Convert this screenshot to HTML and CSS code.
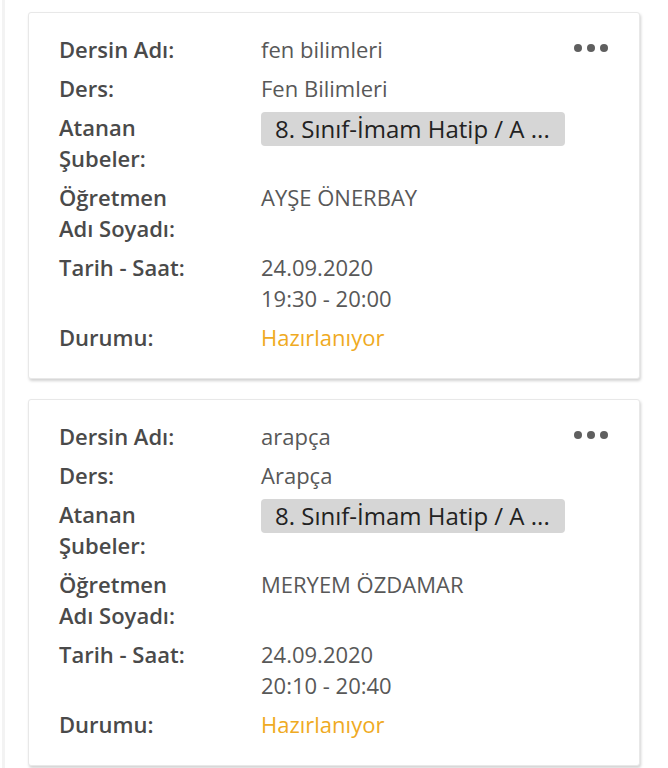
FILE: index.html
```html
<!DOCTYPE html>
<html lang="tr">
<head>
<meta charset="utf-8">
<link rel="stylesheet" href="styles.css">
</head>
<body>
<div class="edge"></div>
<main class="list">
  <section class="card">
    <button class="more" aria-label="menu"><span></span><span></span><span></span></button>
    <dl class="grid">
      <dt>Dersin Adı:</dt><dd>fen bilimleri</dd>
      <dt>Ders:</dt><dd>Fen Bilimleri</dd>
      <dt>Atanan Şubeler:</dt><dd><span class="pill">8. Sınıf-İmam Hatip / A ...</span></dd>
      <dt>Öğretmen Adı Soyadı:</dt><dd>AYŞE ÖNERBAY</dd>
      <dt>Tarih - Saat:</dt><dd>24.09.2020<br>19:30 - 20:00</dd>
      <dt>Durumu:</dt><dd class="status">Hazırlanıyor</dd>
    </dl>
  </section>
  <section class="card">
    <button class="more" aria-label="menu"><span></span><span></span><span></span></button>
    <dl class="grid">
      <dt>Dersin Adı:</dt><dd>arapça</dd>
      <dt>Ders:</dt><dd>Arapça</dd>
      <dt>Atanan Şubeler:</dt><dd><span class="pill">8. Sınıf-İmam Hatip / A ...</span></dd>
      <dt>Öğretmen Adı Soyadı:</dt><dd>MERYEM ÖZDAMAR</dd>
      <dt>Tarih - Saat:</dt><dd>24.09.2020<br>20:10 - 20:40</dd>
      <dt>Durumu:</dt><dd class="status">Hazırlanıyor</dd>
    </dl>
  </section>
</main>
</body>
</html>
```
FILE: styles.css
```css
html, body {
  margin: 0;
  padding: 0;
  background: #ffffff;
  font-family: "Open Sans", "Noto Sans", sans-serif;
}
body {
  overflow: hidden;
  height: 768px;
}
.edge {
  position: fixed;
  left: 2px;
  top: 0;
  bottom: 0;
  width: 3px;
  background: #f3f3f3;
}
.list {
  display: flex;
  flex-direction: column;
  gap: 20px;
  padding: 12px 28px 0 28px;
}
.card {
  position: relative;
  background: #fff;
  border: 1px solid #e8e8e8;
  border-radius: 3px;
  box-shadow: 1px 2px 3px rgba(0,0,0,0.18);
  padding: 21px 30px 25px 30px;
}
.more {
  position: absolute;
  top: 31px;
  right: 31px;
  display: flex;
  gap: 5px;
  padding: 0;
  border: 0;
  background: none;
}
.more span {
  width: 8px;
  height: 8px;
  border-radius: 50%;
  background: #5f5f5f;
}
.grid {
  display: grid;
  grid-template-columns: 140px 1fr;
  column-gap: 62px;
  row-gap: 8px;
  margin: 0;
  font-size: 22px;
  line-height: 31px;
}
dt {
  font-weight: 600;
  color: #4a4a4a;
}
dd {
  margin: 0;
  color: #585858;
}
.pill {
  display: block;
  width: 304px;
  box-sizing: border-box;
  background: #d6d6d6;
  color: #222;
  border-radius: 4px;
  padding: 1px 10px 2px 14px;
  font-size: 24px;
  white-space: nowrap;
  overflow: hidden;
}
.status {
  color: #efaa22;
}
```
